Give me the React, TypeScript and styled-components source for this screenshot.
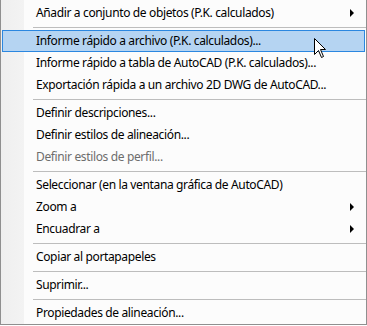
import React from "react";
import styled, { createGlobalStyle } from "styled-components";

const Global = createGlobalStyle`
  html, body { margin: 0; padding: 0; background: #ffffff; }
  body { font-family: "Noto Sans", "Liberation Sans", sans-serif; }
`;

const Menu = styled.div`
  position: relative;
  box-sizing: border-box;
  width: 367px;
  height: 325px;
  padding-top: 2px;
  border: 1px solid #8f8f8f;
  border-top: none;
  background: linear-gradient(to right, #efefef 0, #f3f3f3 23px, #fcfcfc 23px);
  display: flex;
  flex-direction: column;
`;

const Item = styled.div<{ $hot?: boolean; $disabled?: boolean }>`
  box-sizing: border-box;
  height: 22px;
  margin: 0 1px;
  padding-left: 33px;
  padding-right: 10px;
  padding-bottom: 1px;
  display: flex;
  align-items: center;
  justify-content: space-between;
  font-size: 12px;
  letter-spacing: -0.36px;
  color: ${(p) => (p.$disabled ? "#6d6d6d" : "#000000")};
  border: 1px solid ${(p) => (p.$hot ? "#2b87e0" : "transparent")};
  background: ${(p) => (p.$hot ? "#b5d4f2" : "transparent")};
  white-space: nowrap;
`;

const Separator = styled.div`
  height: 6px;
  margin-left: 32px;
  display: flex;
  align-items: center;
  &::after {
    content: "";
    display: block;
    width: 100%;
    height: 1px;
    background: #bdbdbd;
  }
`;

const Arrow = styled.span`
  width: 0;
  height: 0;
  border-top: 4px solid transparent;
  border-bottom: 4px solid transparent;
  border-left: 4px solid #000;
`;

const Cursor = styled.svg`
  position: absolute;
  left: 313px;
  top: 38px;
`;

type Entry = { label?: string; sep?: boolean; sub?: boolean; hot?: boolean; disabled?: boolean };

const entries: Entry[] = [
  { label: "Añadir a conjunto de objetos (P.K. calculados)", sub: true },
  { sep: true },
  { label: "Informe rápido a archivo (P.K. calculados)...", hot: true },
  { label: "Informe rápido a tabla de AutoCAD (P.K. calculados)..." },
  { label: "Exportación rápida a un archivo 2D DWG de AutoCAD..." },
  { sep: true },
  { label: "Definir descripciones..." },
  { label: "Definir estilos de alineación..." },
  { label: "Definir estilos de perfil...", disabled: true },
  { sep: true },
  { label: "Seleccionar (en la ventana gráfica de AutoCAD)" },
  { label: "Zoom a", sub: true },
  { label: "Encuadrar a", sub: true },
  { sep: true },
  { label: "Copiar al portapapeles" },
  { sep: true },
  { label: "Suprimir..." },
  { sep: true },
  { label: "Propiedades de alineación..." },
];

export default function App() {
  return (
    <>
      <Global />
      <Menu>
        {entries.map((e, i) =>
          e.sep ? (
            <Separator key={i} />
          ) : (
            <Item key={i} $hot={e.hot} $disabled={e.disabled}>
              <span>{e.label}</span>
              {e.sub && <Arrow />}
            </Item>
          )
        )}
        <Cursor width="13" height="21" viewBox="0 0 13 21">
          <path
            d="M0.5 0.5 L0.5 16.5 L4.5 12.5 L7.5 19.5 L9.5 18.5 L6.5 11.5 L11.5 11.5 Z"
            fill="#ffffff"
            stroke="#000000"
            strokeWidth="1"
            strokeLinejoin="miter"
          />
        </Cursor>
      </Menu>
    </>
  );
}
